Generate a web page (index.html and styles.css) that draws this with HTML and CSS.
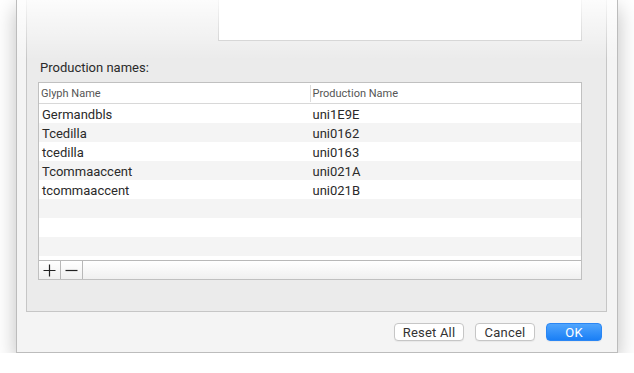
FILE: index.html
```html
<!DOCTYPE html>
<html lang="en">
<head>
    <meta charset="UTF-8">
    <meta name="viewport" content="width=device-width, initial-scale=1.0">
    <title>Production names</title>
    <link rel="stylesheet" href="styles.css">
</head>
<body>

    <div class="window">
        <div class="group">
            <div class="preview"></div>
            <div class="label">Production names:</div>
            <div class="table">
                <div class="thead">
                    <div class="cell">Glyph Name</div>
                    <div class="cell col2">Production Name</div>
                </div>
                <div class="tbody">
                    <div class="row"><div class="cell">Germandbls</div><div class="cell col2">uni1E9E</div></div>
                    <div class="row"><div class="cell">Tcedilla</div><div class="cell col2">uni0162</div></div>
                    <div class="row"><div class="cell">tcedilla</div><div class="cell col2">uni0163</div></div>
                    <div class="row"><div class="cell">Tcommaaccent</div><div class="cell col2">uni021A</div></div>
                    <div class="row"><div class="cell">tcommaaccent</div><div class="cell col2">uni021B</div></div>
                    <div class="row"></div>
                    <div class="row"></div>
                    <div class="row"></div>
                </div>
                <div class="tfoot">
                    <div class="tool">
                        <svg width="13" height="13" viewBox="0 0 13 13"><path d="M6.5 0.5v12M0.5 6.5h12" stroke="#222" stroke-width="1.2" fill="none"/></svg>
                    </div>
                    <div class="tool">
                        <svg width="13" height="13" viewBox="0 0 13 13"><path d="M0.5 6.5h12" stroke="#222" stroke-width="1.2" fill="none"/></svg>
                    </div>
                </div>
            </div>
        </div>
        <div class="buttons">
            <button class="btn" style="width: 70px;">Reset All</button>
            <button class="btn" style="width: 60px;">Cancel</button>
            <button class="btn primary" style="width: 56px;">OK</button>
        </div>
    </div>

</body>
</html>
```

FILE: styles.css
```css
body {
    margin: 0;
    background-color: #fff;
    font-family: Roboto, "Liberation Sans", sans-serif;
    font-size: 13px;
    color: #2a2a2a;
}
.window {
    position: relative;
    box-sizing: border-box;
    width: 602px;
    height: 353px;
    margin-left: 16px;
    padding: 0 10px 0 9px;
    background-color: #f4f4f4;
    border: 1px solid #bcbcbc;
    border-top: none;
    box-shadow: 0 8px 20px rgba(0, 0, 0, 0.26);
}
.window::after {
    content: "";
    position: absolute;
    left: 0;
    right: 0;
    top: 0;
    height: 60px;
    background: linear-gradient(rgba(255, 255, 255, 0.85), rgba(255, 255, 255, 0));
    pointer-events: none;
}
.group {
    box-sizing: border-box;
    height: 312px;
    padding: 0 24px 0 11px;
    background-color: #ebebeb;
    border: 1px solid #c6c6c6;
    border-top: none;
}
.preview {
    box-sizing: border-box;
    height: 41px;
    margin-left: 180px;
    background-color: #fff;
    border: 1px solid #c8c8c8;
    border-top: none;
}
.label {
    margin: 19px 0 0 2px;
    line-height: 16px;
    height: 22px;
}
.table {
    border: 1px solid #c0c0c0;
    background-color: #fff;
}
.thead {
    display: flex;
    height: 20px;
    align-items: center;
    border-bottom: 1px solid #d8d8d8;
    font-size: 11px;
    color: #555;
}
.thead .cell {
    padding-left: 2px;
}
.thead .col2 {
    border-left: 1px solid #dcdcdc;
    line-height: 17px;
}
.cell {
    width: 270px;
    padding-left: 3px;
}
.col2 {
    padding-left: 2px;
}
.tbody {
    height: 156px;
}
.row {
    display: flex;
    box-sizing: border-box;
    height: 19px;
    padding-top: 1px;
    line-height: 19px;
}
.row:nth-child(even) {
    background-color: #f4f4f4;
}
.tfoot {
    display: flex;
    height: 18px;
    border-top: 1px solid #b8b8b8;
    background: linear-gradient(#ffffff, #f0f0f0);
}
.tool {
    width: 21px;
    display: flex;
    align-items: center;
    justify-content: center;
    border-right: 1px solid #b8b8b8;
}
.buttons {
    display: flex;
    justify-content: flex-end;
    gap: 11px;
    margin-top: 11px;
    padding-right: 5px;
}
.btn {
    box-sizing: border-box;
    height: 18px;
    padding: 0;
    font-family: Roboto, "Liberation Sans", sans-serif;
    font-size: 13px;
    letter-spacing: 0.2px;
    color: #333;
    background-color: #fff;
    border: 1px solid #c6c6c6;
    border-radius: 4px;
    box-shadow: 0 1px 1px rgba(0, 0, 0, 0.05);
}
.btn.primary {
    color: #fff;
    background: linear-gradient(#50a5fd, #1a7ff6);
    border-color: #2a86f4;
}
```
